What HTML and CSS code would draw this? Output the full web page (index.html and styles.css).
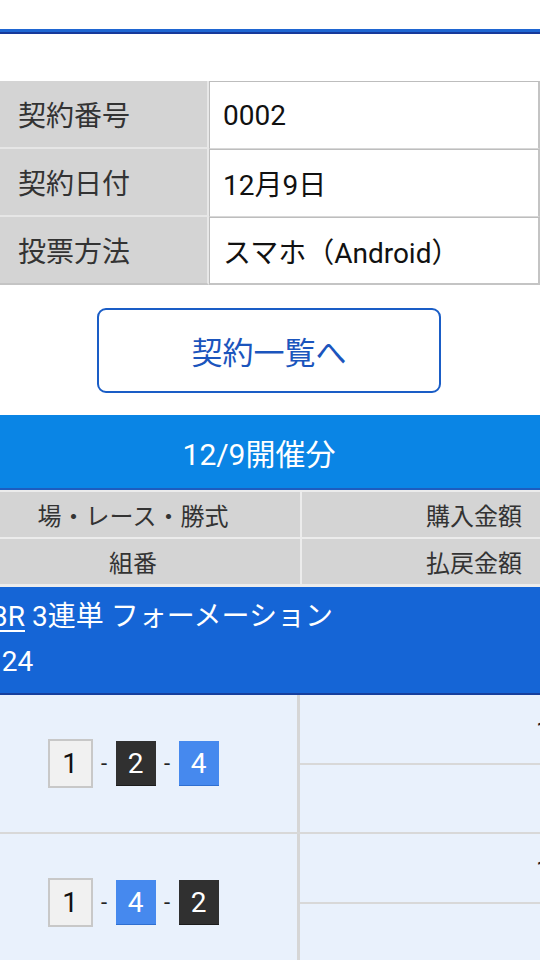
FILE: index.html
```html
<!DOCTYPE html>
<html lang="ja">
<head>
  <meta charset="UTF-8">
  <meta name="viewport" content="width=device-width, initial-scale=1">
  <title>契約詳細</title>
  <link rel="stylesheet" href="styles.css">
</head>
<body>

<div class="page">

  <!-- header rule -->
  <div class="head-space"></div>
  <div class="head-rule"></div>

  <!-- contract info -->
  <table class="contract">
    <tr>
      <th>契約番号</th>
      <td>0002</td>
    </tr>
    <tr>
      <th>契約日付</th>
      <td>12月9日</td>
    </tr>
    <tr>
      <th>投票方法</th>
      <td>スマホ（Android）</td>
    </tr>
  </table>

  <div class="btn-wrap">
    <a class="btn-outline" href="#">契約一覧へ</a>
  </div>

  <!-- day block -->
  <section class="day">
    <h2 class="day-title">12/9開催分</h2>

    <div class="bets">
      <div class="bets-head">
        <div class="cell-left">場・レース・勝式</div>
        <div class="cell-right">購入金額</div>
      </div>
      <div class="bets-head">
        <div class="cell-left">組番</div>
        <div class="cell-right">払戻金額</div>
      </div>

      <div class="race">
        <div><u>3R</u> 3連単 フォーメーション</div>
        <div class="race-count">124</div>
      </div>

      <div class="bet-row">
        <div class="combo">
          <span class="waku waku-1">1</span>
          <span class="dash">-</span>
          <span class="waku waku-2">2</span>
          <span class="dash">-</span>
          <span class="waku waku-4">4</span>
        </div>
        <div class="money">
          <div class="money-cell"><span class="amount">100円</span></div>
          <div class="money-cell"></div>
        </div>
      </div>

      <div class="bet-row">
        <div class="combo">
          <span class="waku waku-1">1</span>
          <span class="dash">-</span>
          <span class="waku waku-4">4</span>
          <span class="dash">-</span>
          <span class="waku waku-2">2</span>
        </div>
        <div class="money">
          <div class="money-cell"><span class="amount">100円</span></div>
          <div class="money-cell"></div>
        </div>
      </div>
    </div>
  </section>

</div>

</body>
</html>
```

FILE: styles.css
```css
body {
  margin: 0;
  background: #fff;
  font-family: Roboto, "Noto Sans CJK JP", sans-serif;
  color: #222;
  overflow: hidden;
}

.page {
  width: 540px;
  overflow: hidden;
}

/* Header rule */
.head-space {
  height: 29px;
}

.head-rule {
  height: 3px;
  background: #1f66d2;
  border-bottom: 2px solid #17399a;
}

/* Contract info table */
.contract {
  width: 540px;
  margin-top: 47px;
  border-collapse: separate;
  border-spacing: 0;
  font-size: 28px;
}

.contract th {
  width: 189px;
  height: 66px;
  padding: 0 0 0 18px;
  text-align: left;
  font-weight: normal;
  color: #333;
  background: #d4d4d4;
  border-right: 2px solid #e8e8e8;
  border-bottom: 2px solid #e6e6e6;
}

.contract td {
  padding: 0 0 0 13px;
  color: #111;
  background: #fff;
  border-top: 1px solid #bdbdbd;
  border-left: 1px solid #bdbdbd;
  border-right: 2px solid #c4c4c4;
  border-bottom: 1px solid #d8d8d8;
}

.contract tr:last-child th,
.contract tr:last-child td {
  border-bottom: 2px solid #c4c4c4;
}

/* Button */
.btn-wrap {
  display: flex;
  justify-content: center;
  padding-top: 23px;
}

.btn-outline {
  display: flex;
  align-items: center;
  justify-content: center;
  width: 340px;
  height: 81px;
  margin-left: -2px;
  border: 2px solid #1a5dc6;
  border-radius: 9px;
  color: #1b55bd;
  font-size: 31px;
  text-decoration: none;
}

/* Day block */
.day {
  margin-top: 22px;
}

.day-title {
  margin: 0;
  height: 73px;
  padding-right: 22px;
  display: flex;
  align-items: center;
  justify-content: center;
  background: #0a85e5;
  border-bottom: 2px solid #1d5cbf;
  color: #fff;
  font-size: 30px;
  font-weight: normal;
}

.bets {
  width: 574px;
  margin-left: -34px;
}

.bets-head {
  display: flex;
  height: 45px;
  border-top: 2px solid #ececec;
  background: #d4d4d4;
  font-size: 24px;
  color: #333;
}

.bets-head .cell-left {
  flex: 0 0 334px;
  display: flex;
  align-items: center;
  justify-content: center;
  border-right: 2px solid #ececec;
}

.bets-head .cell-right {
  flex: 1;
  display: flex;
  align-items: center;
  justify-content: flex-end;
  padding-right: 18px;
}

/* Race row */
.race {
  height: 111px;
  box-sizing: border-box;
  padding: 7px 0 0 26px;
  border-top: 3px solid #ececec;
  border-bottom: 2px solid #173f9c;
  background: #1565d6;
  color: #fff;
  font-size: 28px;
  line-height: 45px;
  white-space: nowrap;
}

.race u {
  text-decoration-thickness: 2px;
  text-underline-offset: 4px;
}

.race-count {
  margin-left: -6px;
}

/* Bet rows */
.bet-row {
  display: flex;
  height: 137px;
  background: #e9f1fc;
  border-bottom: 2px solid #d8d8d8;
}

.combo {
  flex: 0 0 334px;
  box-sizing: border-box;
  display: flex;
  align-items: center;
  justify-content: center;
  padding-left: 3px;
  border-right: 3px solid #d6d6d6;
  font-size: 28px;
}

.waku {
  display: flex;
  align-items: center;
  justify-content: center;
  box-sizing: border-box;
  height: 45px;
  width: 40px;
}

.waku-1 {
  width: 45px;
  height: 49px;
  background: #f1f1f1;
  border: 2px solid #c8c8c8;
  color: #111;
}

.waku-2 {
  background: #303030;
  border-bottom: 1px solid #1c1c1c;
  color: #fff;
}

.waku-4 {
  background: #4689ee;
  border-bottom: 1px solid #2f6fd0;
  color: #fff;
}

.dash {
  width: 23px;
  text-align: center;
  font-size: 22px;
  color: #222;
}

.money {
  flex: 1;
  min-width: 0;
  display: flex;
  flex-direction: column;
}

.money-cell {
  flex: 1;
  display: flex;
  align-items: center;
  overflow: hidden;
  white-space: nowrap;
  font-size: 26px;
}

.money-cell:first-child {
  border-bottom: 2px solid #d8d8d8;
}

.amount {
  padding-left: 236px;
}
```
